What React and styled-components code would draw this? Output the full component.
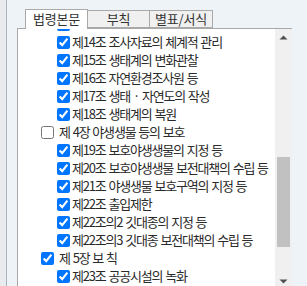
import React from "react";
import styled, { createGlobalStyle } from "styled-components";

const Global = createGlobalStyle`
  html, body { margin: 0; padding: 0; overflow: hidden; }
  body {
    width: 307px;
    height: 286px;
    background: #e9ebee;
    font-family: "Noto Sans CJK KR", "Noto Sans", sans-serif;
  }
`;

const Screen = styled.div`
  display: flex;
  height: 286px;
  overflow: hidden;
`;

const Window = styled.div`
  margin-left: 6px;
  width: 292px;
  flex: none;
  border-left: 1px solid #aab4c0;
  border-right: 1px solid #7d90a6;
  background: #eef3f8;
  padding: 9px 0 0 10px;
  box-sizing: content-box;
  display: flex;
  flex-direction: column;
`;

const TabBar = styled.div`
  display: flex;
  align-items: flex-end;
  margin-left: 8px;
  height: 19px;
  position: relative;
  z-index: 1;
`;

const Tab = styled.div`
  box-sizing: border-box;
  width: ${(p) => p.$w}px;
  height: ${(p) => (p.$active ? 20 : 18)}px;
  margin-bottom: ${(p) => (p.$active ? -1 : 0)}px;
  margin-left: ${(p) => (p.$first ? 0 : -1)}px;
  border: 1px solid #a9a9a9;
  border-bottom: ${(p) => (p.$active ? "none" : "1px solid #a9a9a9")};
  background: ${(p) => (p.$active ? "#ffffff" : "#f0f0f0")};
  display: flex;
  align-items: center;
  justify-content: center;
  font-size: 13px;
  line-height: 13px;
  letter-spacing: -0.2px;
  color: #333;
  padding-bottom: ${(p) => (p.$active ? 3 : 2)}px;
`;

const Panel = styled.div`
  width: 275px;
  box-sizing: border-box;
  height: 262px;
  border-left: 1px solid #a9a9a9;
  border-top: 1px solid #a9a9a9;
  background: #ffffff;
  display: flex;
  flex: none;
`;

const ListViewport = styled.div`
  flex: 1;
  overflow: hidden;
`;

const List = styled.ul`
  list-style: none;
  margin: -14px 0 0 0;
  padding: 0;
`;

const Row = styled.li`
  display: flex;
  align-items: center;
  height: 18px;
  line-height: 18px;
  padding-left: ${(p) => (p.$chapter ? 23 : 39)}px;
  gap: ${(p) => (p.$chapter ? 5 : 2)}px;
  white-space: nowrap;
  font-size: 13px;
  letter-spacing: -1.2px;
  word-spacing: 1.2px;
  color: #2a2a2a;
`;

const Check = styled.input.attrs({ type: "checkbox" })`
  margin: 0;
  width: 13px;
  height: 13px;
  flex: none;
`;

const ScrollBar = styled.div`
  width: 17px;
  flex: none;
  background: #f0f0f0;
  display: flex;
  flex-direction: column;
`;

const ArrowButton = styled.div`
  height: 17px;
  flex: none;
  display: flex;
  align-items: center;
  justify-content: center;
`;

const Track = styled.div`
  flex: 1;
  padding: 0 2px;
`;

const Thumb = styled.div`
  margin-top: 111px;
  height: 90px;
  background: #c1c1c1;
`;

const Arrow = ({ down }) => (
  <svg width="9" height="5" viewBox="0 0 9 5">
    <path
      d={down ? "M0.5 0.5 L8.5 0.5 L4.5 4.5 Z" : "M0.5 4.5 L8.5 4.5 L4.5 0.5 Z"}
      fill="#505050"
    />
  </svg>
);

const rows = [
  { t: "", c: true },
  { t: "제14조 조사자료의 체계적 관리", c: true },
  { t: "제15조 생태계의 변화관찰", c: true },
  { t: "제16조 자연환경조사원 등", c: true },
  { t: "제17조 생태 · 자연도의 작성", c: true },
  { t: "제18조 생태계의 복원", c: true },
  { t: "제 4장 야생생물 등의 보호", c: false, ch: true },
  { t: "제19조 보호야생생물의 지정 등", c: true },
  { t: "제20조 보호야생생물 보전대책의 수립 등", c: true },
  { t: "제21조 야생생물 보호구역의 지정 등", c: true },
  { t: "제22조 출입제한", c: true },
  { t: "제22조의2 깃대종의 지정 등", c: true },
  { t: "제22조의3 깃대종 보전대책의 수립 등", c: true },
  { t: "제 5장 보 칙", c: true, ch: true },
  { t: "제23조 공공시설의 녹화", c: true },
];

export default function App() {
  return (
    <>
      <Global />
      <Screen>
        <Window>
          <TabBar>
            <Tab $w={63} $active $first>법령본문</Tab>
            <Tab $w={63}>부칙</Tab>
            <Tab $w={64}>별표/서식</Tab>
          </TabBar>
          <Panel>
            <ListViewport>
              <List>
                {rows.map((r, i) => (
                  <Row key={i} $chapter={r.ch}>
                    <Check defaultChecked={r.c} />
                    {r.t && <span>{r.t}</span>}
                  </Row>
                ))}
              </List>
            </ListViewport>
            <ScrollBar>
              <ArrowButton>
                <Arrow />
              </ArrowButton>
              <Track>
                <Thumb />
              </Track>
              <ArrowButton>
                <Arrow down />
              </ArrowButton>
            </ScrollBar>
          </Panel>
        </Window>
      </Screen>
    </>
  );
}
